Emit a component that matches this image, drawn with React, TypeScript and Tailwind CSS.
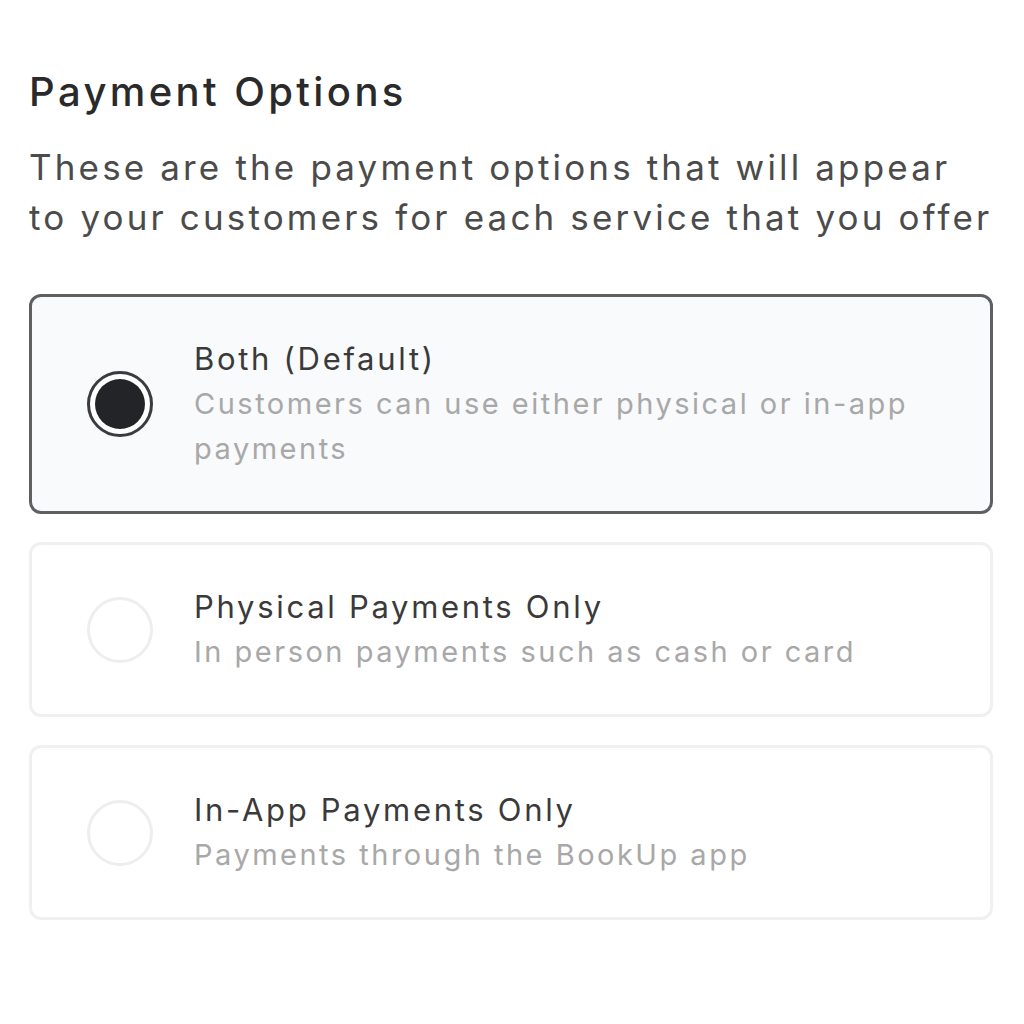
import React, { useState } from 'react';

const options = [
  { id: 'both', title: 'Both (Default)', desc: 'Customers can use either physical or in-app payments' },
  { id: 'physical', title: 'Physical Payments Only', desc: 'In person payments such as cash or card' },
  { id: 'inapp', title: 'In-App Payments Only', desc: 'Payments through the BookUp app' },
];

export default function App() {
  const [selected, setSelected] = useState('both');

  return (
    <div className="min-h-screen bg-white px-[29px] pt-[64px] font-['Inter',sans-serif]">
      <h1 className="text-[40px] font-medium leading-[56px] tracking-[3.4px] text-[#2a2a2a]">Payment Options</h1>
      <p className="mt-[22px] text-[35px] leading-[50px] tracking-[3.15px] text-[#4b4b4b] whitespace-nowrap">
        These are the payment options that will appear
        <br />
        to your customers for each service that you offer
      </p>

      <div className="mt-[52px] flex w-[964px] flex-col gap-[28px]">
        {options.map((o) => {
          const active = selected === o.id;
          return (
            <button
              key={o.id}
              onClick={() => setSelected(o.id)}
              className={
                active
                  ? 'flex items-center gap-[41px] rounded-[12px] border-[3px] border-[#5e6063] bg-[#f8fafb] px-[55px] py-[40px] text-left'
                  : 'flex items-center gap-[41px] rounded-[12px] border-[3px] border-[#f0f0f0] bg-white px-[55px] py-[40px] text-left'
              }
            >
              {active ? (
                <span className="flex h-[66px] w-[66px] shrink-0 items-center justify-center rounded-full border-[3px] border-[#3a3c3f] bg-white">
                  <span className="h-[50px] w-[50px] rounded-full bg-[#222427]" />
                </span>
              ) : (
                <span className="h-[66px] w-[66px] shrink-0 rounded-full border-[3px] border-[#eeeeee] bg-white" />
              )}
              <span className="flex w-[720px] flex-col">
                <span className="text-[31px] leading-[44px] tracking-[2.7px] text-[#3a3a3a]">{o.title}</span>
                <span className="text-[29px] leading-[45px] tracking-[2.5px] text-[#a8a8a8]">{o.desc}</span>
              </span>
            </button>
          );
        })}
      </div>
    </div>
  );
}
